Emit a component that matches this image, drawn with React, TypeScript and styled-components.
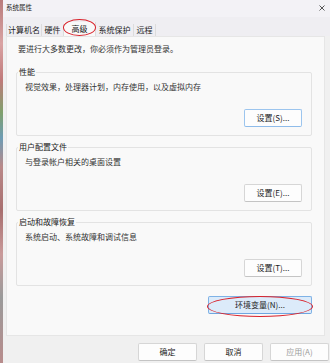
import React from "react";
import styled, { createGlobalStyle } from "styled-components";

const GlobalStyle = createGlobalStyle`
  html, body { margin: 0; padding: 0; background: #f0f0f0; }
  body { font-family: "Noto Sans CJK SC", "Noto Sans", sans-serif; }
  * { box-sizing: border-box; }
`;

const Screen = styled.div`
  display: flex;
  width: 330px;
  height: 363px;
  overflow: hidden;
`;

const DesktopEdge = styled.div`
  width: 3px;
  flex: none;
  background: linear-gradient(
    to bottom,
    #b97c7c 0%,
    #d9a3a3 12%,
    #c07a7a 22%,
    #7fa06c 31%,
    #6d9cb4 38%,
    #b98888 46%,
    #a86f6f 58%,
    #c99a9a 70%,
    #9a9a9a 82%,
    #b88c8c 100%
  );
`;

const Window = styled.div`
  flex: 1;
  display: flex;
  flex-direction: column;
  background: #f0f0f0;
  color: #1c1c1c;
  font-size: 8px;
`;

const TitleBar = styled.div`
  height: 17px;
  flex: none;
  display: flex;
  align-items: center;
  justify-content: space-between;
  padding: 0 5px 2px 3px;
  background: #f3f2f6;
`;

const Title = styled.span`
  font-size: 6.5px;
  line-height: 1;
  color: #222;
`;

const CloseIcon = () => (
  <svg width="6" height="6" viewBox="0 0 6 6">
    <path d="M0.5 0.5 L5.5 5.5 M5.5 0.5 L0.5 5.5" stroke="#444" strokeWidth="0.9" />
  </svg>
);

const TabRow = styled.div`
  height: 19px;
  flex: none;
  display: flex;
  align-items: flex-end;
  padding-left: 3px;
  background: #efeef2;
`;

const Tab = styled.div<{ $w: number; $active?: boolean }>`
  position: relative;
  width: ${(p) => p.$w}px;
  height: ${(p) => (p.$active ? 14 : 12)}px;
  display: flex;
  align-items: center;
  justify-content: center;
  line-height: 1;
  white-space: nowrap;
  color: #1c1c1c;
  background: ${(p) => (p.$active ? "#f9f9f9" : "transparent")};
  border-right: 1px solid #dcdcdc;
  &:first-child {
    border-left: 1px solid #dcdcdc;
  }
`;

const TabCircle = styled.div`
  position: absolute;
  left: -1px;
  top: -3px;
  width: 33px;
  height: 17px;
  border: 1.6px solid #d9222b;
  border-radius: 50%;
  pointer-events: none;
`;

const Panel = styled.div`
  height: 300px;
  flex: none;
  margin: 0 5px 0 3px;
  background: #f9f9f9;
  border: 1px solid #e6e6e6;
  padding: 6px 12px 0 9px;
  display: flex;
  flex-direction: column;
`;

const Intro = styled.div`
  line-height: 11px;
  padding-left: 2px;
  color: #333;
  margin-bottom: 18px;
`;

const Group = styled.section<{ $last?: boolean }>`
  height: 64px;
  flex: none;
  margin-bottom: ${(p) => (p.$last ? 10 : 11)}px;
  padding: 0 9px 8px 8px;
  border: 1px solid #e3e3e3;
  border-radius: 2px;
  display: flex;
  flex-direction: column;
`;

const GroupLabel = styled.div`
  align-self: flex-start;
  margin: -6px 0 0 -7px;
  padding: 0 1px;
  line-height: 10px;
  background: #f9f9f9;
  color: #222;
`;

const Desc = styled.div`
  margin-top: 4px;
  line-height: 11px;
  color: #333;
`;

const Button = styled.button<{ $w: number; $variant?: "focus" | "accent" | "disabled" }>`
  position: relative;
  width: ${(p) => p.$w}px;
  height: 18px;
  padding: 0;
  font-family: inherit;
  font-size: 8px;
  line-height: 1;
  border-radius: 2px;
  color: ${(p) => (p.$variant === "disabled" ? "#9c9c9c" : "#1c1c1c")};
  background: ${(p) => (p.$variant === "accent" ? "#dcebfa" : "#fdfdfd")};
  border: 1px solid
    ${(p) =>
      p.$variant === "accent" ? "#7fb2e6" : p.$variant === "focus" ? "#9cc5ee" : "#d6d6d6"};
  border-bottom-color: ${(p) =>
    p.$variant === "accent" ? "#6fa6e0" : p.$variant === "focus" ? "#8fbcea" : "#c4c4c4"};
`;

const GroupActions = styled.div`
  margin-top: auto;
  display: flex;
  justify-content: flex-end;
`;

const EnvRow = styled.div`
  display: flex;
  justify-content: flex-end;
`;

const ButtonCircle = styled.div`
  position: absolute;
  left: -2px;
  top: -1px;
  width: 106px;
  height: 21px;
  border: 1.8px solid #d9222b;
  border-radius: 50%;
  pointer-events: none;
`;

const Footer = styled.div`
  flex: 1;
  display: flex;
  justify-content: flex-end;
  align-items: flex-start;
  gap: 7px;
  padding: 7px 1px 0 0;
`;

const tabs = [
  { label: "计算机名", w: 36 },
  { label: "硬件", w: 22 },
  { label: "高级", w: 32, active: true },
  { label: "系统保护", w: 38 },
  { label: "远程", w: 22 },
];

const groups = [
  { title: "性能", desc: "视觉效果，处理器计划，内存使用，以及虚拟内存", btn: "设置(S)...", focus: true },
  { title: "用户配置文件", desc: "与登录帐户相关的桌面设置", btn: "设置(E)..." },
  { title: "启动和故障恢复", desc: "系统启动、系统故障和调试信息", btn: "设置(T)..." },
];

export default function App() {
  return (
    <>
      <GlobalStyle />
      <Screen>
        <DesktopEdge />
        <Window>
          <TitleBar>
            <Title>系统属性</Title>
            <CloseIcon />
          </TitleBar>
          <TabRow>
            {tabs.map((t) => (
              <Tab key={t.label} $w={t.w} $active={t.active}>
                {t.label}
                {t.active && <TabCircle />}
              </Tab>
            ))}
          </TabRow>
          <Panel>
            <Intro>要进行大多数更改，你必须作为管理员登录。</Intro>
            {groups.map((g, i) => (
              <Group key={g.title} $last={i === groups.length - 1}>
                <GroupLabel>{g.title}</GroupLabel>
                <Desc>{g.desc}</Desc>
                <GroupActions>
                  <Button $w={58} $variant={g.focus ? "focus" : undefined}>
                    {g.btn}
                  </Button>
                </GroupActions>
              </Group>
            ))}
            <EnvRow>
              <Button $w={104} $variant="accent">
                环境变量(N)...
                <ButtonCircle />
              </Button>
            </EnvRow>
          </Panel>
          <Footer>
            <Button $w={59}>确定</Button>
            <Button $w={59}>取消</Button>
            <Button $w={59} $variant="disabled">
              应用(A)
            </Button>
          </Footer>
        </Window>
      </Screen>
    </>
  );
}
